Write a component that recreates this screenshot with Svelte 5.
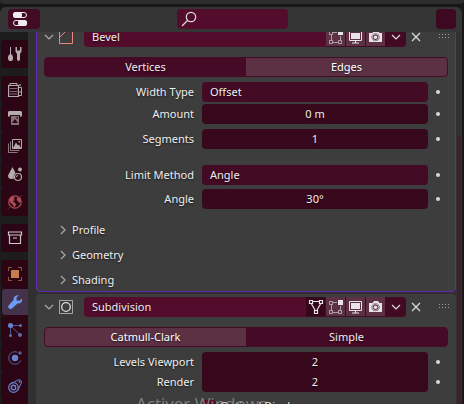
<script>
  let bevelMode = $state('Edges');
  let subdivisionMode = $state('Catmull-Clark');
  let activeTab = $state('modifiers');

  const tabGroups = [
    ['tool'],
    ['render', 'output', 'layers', 'scene', 'world'],
    ['collection'],
    ['object', 'modifiers', 'particles', 'physics', 'constraints', 'data']
  ];
  const bevelFields = [
    { id: 'width-type', label: 'Width Type', value: 'Offset', select: true },
    { id: 'amount', label: 'Amount', value: '0 m' },
    { id: 'segments', label: 'Segments', value: '1', space: true },
    { id: 'limit', label: 'Limit Method', value: 'Angle', select: true, section: true },
    { id: 'angle', label: 'Angle', value: '30°', follow: true }
  ];
  const levels = [
    { id: 'levels', label: 'Levels Viewport', value: '2' },
    { id: 'render-levels', label: 'Render', value: '2' }
  ];
</script>

{#snippet tabIcon(name)}
  <svg class="ticon {name}" viewBox="0 0 14 14" aria-hidden="true">
    {#if name === 'tool'}
      <path d="M2.500 0v8" stroke="currentColor" />
      <path d="M1 7.500h3L5 10v2l-1 2H1.200L0 12v-2z" fill="currentColor" />
      <path d="M7.500 0h1.500v3.500h3V0h1.500v4.500L12 7v5.500L11 14h-1l-1-1.500V7L7.500 4.500z" fill="currentColor" />
    {:else if name === 'render'}
      <path d="M2 2V.5h7V2" fill="none" stroke="currentColor" />
      <path d="M.6 2.500h9.800v11H.6z" fill="none" stroke="currentColor" stroke-width="1.200" />
      <path d="M2 5.500h7M2 8.500h7M2 11h7" stroke="currentColor" opacity=".6" />
      <path d="M11 4.500h2.500v8H11M11 9h2" fill="none" stroke="currentColor" />
      <path d="M11 1h2v2h-2z" fill="currentColor" opacity=".6" />
    {:else if name === 'output'}
      <path d="M1 0h12l1 1v4.500h-2V4H2v1.500H0V1z" fill="currentColor" />
      <path fill-rule="evenodd" d="M3 5h8v9H3zm1 7h6L7 8zM8.500 6v1.500H10V6z" fill="currentColor" opacity=".65" />
    {:else if name === 'layers'}
      <path d="M4.500.5h9v9h-9z" fill="none" stroke="currentColor" />
      <path d="M2.500 2.500v9h9M.5 4.500v9h9" fill="none" stroke="currentColor" opacity=".7" />
      <path d="M5 9l3-5.500 2 3 1-1L13 9zM10.500 2H12v1.500h-1.500z" fill="currentColor" />
    {:else if name === 'scene'}
      <path d="M4.500 0L7.500 6Q5 7.500 6 11.500L4 12Q0 12 0 8.500z" fill="currentColor" />
      <circle cx="12" cy="2.500" r="2" fill="currentColor" />
      <circle cx="10" cy="10" r="3.500" fill="none" stroke="currentColor" stroke-width="1.200" />
      <path d="M8.500 10Q8.500 8.500 10 8.500" fill="none" stroke="currentColor" />
    {:else if name === 'world'}
      <circle cx="7" cy="7" r="6.200" fill="none" stroke="currentColor" stroke-width="1.200" />
      <path d="M1 4.500L4 1.500 6.500 2 5.500 4 6.500 5 4.500 6.500 7 8 8 9.500 6 12.500 5 9.500 2 7zM9 3l3-.5 1 4-2 1-2-2.500zM0 14l2-2M12 2l2-2" fill="currentColor" stroke="currentColor" stroke-width=".4" />
    {:else if name === 'collection'}
      <path d="M.5 1h13v3H.5zM1.500 4v8.500h11V4M5 7h4" fill="none" stroke="currentColor" stroke-width="1.200" />
    {:else if name === 'object'}
      <path d="M3 3h8v8H3z" fill="currentColor" />
      <path d="M.5 4V.5H4M10 .5h3.500V4M.5 10v3.500H4M10 13.500h3.500V10" fill="none" stroke="currentColor" opacity=".65" />
    {:else if name === 'modifiers'}
      <path d="M11 0L8.500 2.500v3l3 .2L14 3.500V6q-1 3-4.500 2.500L4 13.500q-2 1-3.500-.5Q-.5 11.500 1 10L5.500 5Q5 .5 11 0z" fill="currentColor" />
    {:else if name === 'particles'}
      <circle cx="2.500" cy="2.500" r="2.500" fill="currentColor" />
      <path d="M2.500 2.500H13M2.500 2.500V13M2.500 2.500L12 12" stroke="currentColor" opacity=".65" />
      <g fill="currentColor" opacity=".8"><circle cx="12.500" cy="2.500" r="1.500" /><circle cx="2.500" cy="12.500" r="1.500" /><circle cx="12" cy="12" r="2" /></g>
    {:else if name === 'physics'}
      <circle cx="7" cy="7" r="3.200" fill="currentColor" />
      <path d="M9.500 1.200A6.300 6.300 0 1 0 12.800 9.500" fill="none" stroke="currentColor" opacity=".7" />
      <circle cx="12" cy="2" r="1.800" fill="currentColor" opacity=".7" />
    {:else if name === 'constraints'}
      <path d="M2 5L10.500.8Q14 .5 13.300 4L10 11" fill="none" stroke="currentColor" />
      <circle cx="5.500" cy="8.500" r="4.800" fill="none" stroke="currentColor" stroke-width="1.200" />
      <circle cx="5.500" cy="8.500" r="2.200" fill="none" stroke="currentColor" stroke-width="1.400" />
      <circle cx="11.500" cy="2.700" r="1" fill="currentColor" />
    {/if}
  </svg>
{/snippet}

{#snippet chevron(right)}
  <svg class="chev" viewBox="0 0 10 10" aria-hidden="true">
    <path d={right ? 'M3 1l4 4-4 4' : 'M1 3l4 4 4-4'} />
  </svg>
{/snippet}

{#snippet switches(name, cage)}
  {#if cage}
    <button class="mode off" aria-label="On cage">
      <svg viewBox="0 0 16 16"><path d="M3.500 5L7 11M12.500 5L9 11M5 2.500h6" fill="none" stroke="currentColor" stroke-width="1.200" /><path d="M1.500 1.500h3v3h-3zM11.500 1.500h3v3h-3zM6.500 11.500h3v3h-3z" fill="none" stroke="currentColor" stroke-width="1.200" /></svg>
    </button>
  {/if}
  <button class="mode" aria-label="Edit mode">
    <svg viewBox="0 0 16 16"><g opacity=".6" fill="none" stroke="currentColor"><path d="M1.500 2.500h3v3h-3zM1.500 11.500h3v3h-3zM10.500 11.500h3v3h-3zM3.500 6v5M12.500 7v4M5 3.500h4M5 13.500h5" /></g><path d="M10 1h5v5h-5z" fill="currentColor" /></svg>
  </button>
  <button class="mode" aria-label="Realtime">
    <svg viewBox="0 0 16 16"><path d="M1.500 2.500h12v9h-12z" fill="none" stroke="currentColor" /><path d="M3 4h9v6H3zM7 12h1v1.500h3v1H4v-1h3z" fill="currentColor" /></svg>
  </button>
  <button class="mode" aria-label="Render">
    <svg viewBox="0 0 16 16"><path fill-rule="evenodd" d="M1 4h3.500L6 2h4l1.500 2H14v9H1zm6.500.2a4 4 0 1 0 .1 0z" fill="currentColor" /><circle cx="7.500" cy="8.200" r="3.300" fill="none" stroke="currentColor" opacity=".75" /><circle cx="7.500" cy="8.200" r="1.800" fill="currentColor" /></svg>
  </button>
  <button class="mode menu" aria-label="{name} options">{@render chevron(false)}</button>
{/snippet}

{#snippet panelEnd(name)}
  <button class="close" aria-label="Remove {name}">
    <svg viewBox="0 0 10 10"><path d="M1 1l8 8M9 1L1 9" /></svg>
  </button>
  <svg class="grip" viewBox="0 0 11 5" aria-hidden="true">
    {#each [0, 3, 6, 9] as x}
      <path d="M{x} 0h1v1h-1zM{x} 3h1v1h-1z" />
    {/each}
  </svg>
{/snippet}

{#snippet field(f)}
  <div class="row" class:space={f.space} class:follow={f.follow} class:section={f.section}>
    <label for={f.id}>{f.label}</label>
    {#if f.select}
      <select id={f.id}><option>{f.value}</option></select>
    {:else}
      <input id={f.id} type="text" value={f.value} />
    {/if}
    <span class="dot"></span>
  </div>
{/snippet}

<div class="app">
  <div class="edge"></div>
  <header>
    <button class="editor" aria-label="Editor type">
      <svg viewBox="0 0 16 16"><rect x="1.500" y="1.500" width="13" height="5" rx="2.500" fill="none" stroke="#eee" /><rect x="1" y="1" width="9" height="6" rx="2.500" fill="#eee" /><rect x="1.500" y="9.500" width="13" height="5" rx="2.500" fill="none" stroke="#eee" /><rect x="6" y="9" width="9" height="6" rx="2.500" fill="#eee" /></svg>
    </button>
    <label class="search">
      <svg viewBox="0 0 16 16" aria-hidden="true"><circle cx="10" cy="6" r="4.700" /><path d="M6.500 9.500L1 15" /></svg>
      <input type="search" aria-label="Search" />
    </label>
    <button class="options" aria-label="Options"></button>
  </header>

  <div class="body">
    <nav>
      {#each tabGroups as group}
        <div class="group">
          {#each group as tab}
            <button class="tab" class:active={tab === activeTab} aria-label={tab} onclick={() => (activeTab = tab)}>
              {@render tabIcon(tab)}
            </button>
          {/each}
        </div>
      {/each}
    </nav>

    <main>
      <section class="panel selected">
        <div class="head">
          <button class="fold" aria-label="Collapse Bevel">{@render chevron(false)}</button>
          <svg class="kind bevel" viewBox="0 0 14 14" aria-hidden="true"><path d="M.5 13.500V.5h13v13zM.5 7.500l7-7" /></svg>
          <div class="bar">
            <input type="text" value="Bevel" aria-label="Modifier name" />
            {@render switches('Bevel', false)}
          </div>
          {@render panelEnd('Bevel')}
        </div>
        <div class="choice">
          {#each ['Vertices', 'Edges'] as m}
            <button class:on={bevelMode === m} onclick={() => (bevelMode = m)}>{m}</button>
          {/each}
        </div>
        {#each bevelFields as f}{@render field(f)}{/each}
        <div class="subs">
          {#each ['Profile', 'Geometry', 'Shading'] as s}
            <button class="sub">{@render chevron(true)}{s}</button>
          {/each}
        </div>
      </section>

      <section class="panel">
        <div class="head">
          <button class="fold" aria-label="Collapse Subdivision">{@render chevron(false)}</button>
          <svg class="kind" viewBox="0 0 14 14" aria-hidden="true"><path d="M.5.5h13v13H.5z" opacity=".65" /><circle cx="7" cy="7" r="4.300" stroke-width="1.300" /></svg>
          <div class="bar">
            <input type="text" value="Subdivision" aria-label="Modifier name" />
            {@render switches('Subdivision', true)}
          </div>
          {@render panelEnd('Subdivision')}
        </div>
        <div class="choice">
          {#each ['Catmull-Clark', 'Simple'] as m}
            <button class:on={subdivisionMode === m} onclick={() => (subdivisionMode = m)}>{m}</button>
          {/each}
        </div>
        <div class="joined">
          {#each levels as f}{@render field(f)}{/each}
        </div>
        <label class="check"><input type="checkbox" />Optimal Display</label>
      </section>
    </main>
    <div class="scroll"><div class="thumb"></div></div>
  </div>
  <div class="notice">Activer Windows</div>
</div>

<style>
  :global(body) { background: #171717; }
  * { box-sizing: border-box; }
  .app {
    position: relative;
    display: flex;
    flex-direction: column;
    height: 100vh;
    overflow: hidden;
    background: #171717;
    color: #eee;
    font: 11px/20px "Noto Sans", "DejaVu Sans", sans-serif;
    text-shadow: 0 1px 2px #0009;
  }
  button, input, select {
    margin: 0;
    padding: 0;
    border: 0;
    font: inherit;
    color: inherit;
    text-shadow: inherit;
    background: none;
  }
  button { display: flex; align-items: center; justify-content: center; }
  svg { display: block; flex: none; }
  .edge { flex: none; height: 4px; background: #2c2c2c; border-radius: 0 0 4px 4px; }
  header {
    flex: none;
    display: flex;
    justify-content: space-between;
    align-items: center;
    height: 25px;
    margin: 3px 2px 0 0;
    padding: 0 6px 1px 8px;
    background: #353535;
    border-radius: 6px 6px 0 0;
  }
  .editor { width: 32px; height: 20px; padding-right: 8px; background: #430a24; border-radius: 4px; }
  .editor svg { width: 16px; height: 16px; }
  .search {
    display: flex;
    align-items: center;
    width: 111px;
    height: 20px;
    margin-right: 12px;
    padding-left: 4px;
    background: #540c2d;
    border-radius: 4px;
  }
  .search svg { width: 16px; height: 16px; fill: none; stroke: #ddd; stroke-width: 1.2; }
  .search input { flex: 1; min-width: 0; outline: 0; }
  .options { width: 20px; height: 20px; background: #3d0820; border-radius: 4px; }

  .body { flex: 1; display: flex; min-height: 0; margin-right: 2px; background: #303030; overflow: hidden; }
  nav {
    flex: none;
    display: flex;
    flex-direction: column;
    gap: 8px;
    width: 28px;
    padding: 8px 0 0 1px;
    background: #1d1d1d;
  }
  .tab { width: 27px; height: 28px; background: #2c0515; border-radius: 4px 0 0 4px; color: #b5abae; }
  .tab.active { background: #44314a; border: 1px solid #2c0515; border-right: 0; }
  .ticon { width: 14px; height: 14px; overflow: visible; }
  .world { color: #b04b58; }
  .collection { color: #d0c6ca; }
  .object { color: #c47e4e; }
  .modifiers { color: #6c9bf5; }
  .particles, .physics, .constraints { color: #6684d0; }

  main { flex: 1; display: flex; flex-direction: column; gap: 2px; min-width: 0; padding-left: 8px; }
  .panel { flex: none; padding: 3px 8px 0; background: #3d3d3d; border-radius: 4px; }
  .selected {
    margin-top: -9px;
    padding: 3px 7px 1px;
    border: 1px solid #6429b8;
  }
  .head { display: flex; align-items: center; height: 20px; }
  .fold { width: 10px; height: 20px; }
  .chev { width: 10px; height: 10px; fill: none; stroke: #aaa; stroke-width: 1.2; }
  .kind { width: 14px; height: 14px; margin: 0 11px 0 5px; fill: none; stroke: #ddd; }
  .bevel { stroke: #ee8580; }
  .bar { flex: 1; display: flex; min-width: 0; height: 20px; background: #540c2d; border-radius: 4px; overflow: hidden; }
  .bar input { flex: 1; min-width: 0; padding-left: 8px; }
  .mode { width: 20px; height: 20px; background: #5b3143; border-right: 1px solid #430a24; border-bottom: 1px solid #430a24; color: #e8e4e6; }
  .mode svg { width: 16px; height: 16px; }
  .mode.off { background: #35071b; }
  .mode.menu { background: #430a24; border: 0; }
  .menu .chev { width: 10px; height: 10px; stroke: #ddd; }
  .close { width: 20px; height: 20px; }
  .close svg { width: 10px; height: 10px; fill: none; stroke: #ddd; stroke-width: 1.2; }
  .grip { width: 11px; height: 5px; margin: 0 -2px 2px 13px; fill: #999; }

  .choice { display: flex; height: 20px; margin: 10px 0 5px; background: #450a26; border: 1px solid #450a26; border-radius: 4px; overflow: hidden; }
  .choice button { flex: 1; }
  .choice .on { background: #5b3143; color: #fff; }
  .row { display: flex; align-items: center; height: 20px; margin-bottom: 2px; }
  .row label { width: 150px; margin-right: 8px; text-align: right; }
  .row input, .row select { flex: 1; min-width: 0; height: 20px; background: #38081c; border-radius: 4px; text-align: center; }
  .row select { appearance: none; padding-left: 8px; background: #430a24; text-align: left; }
  .dot { width: 4px; height: 4px; margin: 0 8px; background: #d8d8d8; border-radius: 50%; }
  .row.space { margin-top: 5px; }
  .row.follow { margin-top: 4px; }
  .row.section { margin-top: 16px; }
  .subs { display: flex; flex-direction: column; gap: 5px; margin-top: 11px; }
  .sub { justify-content: flex-start; gap: 4px; height: 20px; padding-left: 14px; }
  .joined .row { margin: 0; }
  .joined .row:first-child input { border-radius: 4px 4px 0 0; }
  .joined .row:last-child input { border-radius: 0 0 4px 4px; }
  .check { display: flex; align-items: center; gap: 4px; margin: 4px 0 0 159px; }
  .check input { appearance: none; width: 13px; height: 13px; background: #540c2d; border-radius: 3px; }

  .scroll { flex: none; display: flex; width: 6px; padding: 104px 1px 0 1px; }
  .thumb { flex: 1; background: #3b212d; border-radius: 2px 2px 0 0; }
  .notice {
    position: absolute;
    left: 136px;
    top: 391px;
    font: 17px/26px "Open Sans", sans-serif;
    color: #999b;
    text-shadow: none;
    pointer-events: none;
  }
</style>
